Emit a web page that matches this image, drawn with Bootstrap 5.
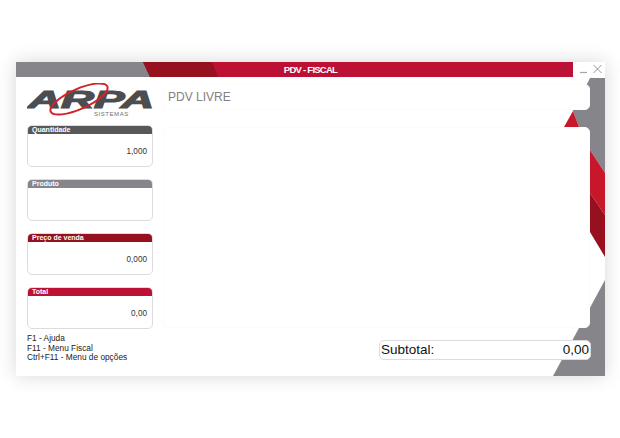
<!DOCTYPE html>
<html lang="pt-BR">
<head>
  <meta charset="UTF-8">
  <title>PDV - Fiscal</title>
  <link href="https://cdn.jsdelivr.net/npm/bootstrap@5.3.3/dist/css/bootstrap.min.css" rel="stylesheet">
  <style>
    body {
      background: #fff;
      font-family: "Liberation Sans", Arial, sans-serif;
      padding: 62px 15px 62px 16px;
    }
    .pdv-window {
      width: 589px;
      height: 314px;
      background: #fff;
      box-shadow: 0 0 18px rgba(0, 0, 0, .16);
    }
    .pdv-art {
      position: absolute;
      inset: 0;
      width: 100%;
      height: 100%;
    }
    .pdv-titlebar {
      height: 16px;
      display: grid;
      grid-template-columns: 1fr auto 1fr;
      align-items: center;
    }
    .pdv-title {
      color: #fff;
      font-size: 9.5px;
      font-weight: 700;
      letter-spacing: -.75px;
    }
    .pdv-winbtns {
      justify-self: end;
      width: 31px;
      height: 16px;
    }
    .pdv-side {
      width: 126px;
      margin-left: 11px;
    }
    .pdv-logo {
      display: block;
      width: 128px;
      height: 43px;
      margin-top: 5px;
      margin-bottom: -1px;
    }
    .pdv-logo-word {
      font: italic 700 24px "Liberation Sans", sans-serif;
      fill: #4d4d4f;
      stroke: #4d4d4f;
      stroke-width: 1.2px;
    }
    .pdv-logo-sub {
      font: 400 6px "Liberation Sans", sans-serif;
      fill: #6d6e71;
      letter-spacing: .55px;
    }
    .pdv-fields {
      gap: 12px;
    }
    .pdv-field {
      height: 42px;
      border: 1px solid #dcdcde;
      border-radius: 5px;
      overflow: hidden;
      background: #fff;
    }
    .pdv-field .card-header {
      height: 9px;
      padding: 0 0 0 5px;
      margin: -1px -1px 0;
      border: 0;
      border-radius: 0;
      color: #fff;
      font-size: 7px;
      font-weight: 700;
      line-height: 9px;
    }
    .pdv-field .card-body {
      padding: 5px 5px 0 0;
      color: #333;
      font-size: 8.2px;
    }
    .head-dark { background: #58585a; }
    .head-gray { background: #85858b; }
    .head-wine { background: #96101f; }
    .head-red { background: #bd1035; }
    .pdv-help {
      margin-top: 5px;
      color: #222;
      font-size: 8.3px;
      line-height: 9.6px;
    }
    .pdv-main {
      width: 427px;
      margin-left: 10px;
      margin-top: 6px;
    }
    .pdv-panel {
      background: #fff;
      border: 1px solid #fbfbfb;
      border-radius: 5px;
    }
    .pdv-heading {
      height: 26px;
      padding-left: 4px;
      color: #808184;
      font-size: 12px;
    }
    .pdv-grid {
      height: 201px;
      margin-top: 17px;
    }
    .pdv-subtotal {
      width: 212px;
      height: 20px;
      margin: 12px -1px 0 auto;
      padding: 0 1px;
      background: #fff;
      border: 1px solid #dcdcde;
      border-radius: 5px;
      color: #111;
      font-size: 13.5px;
    }
  </style>
</head>
<body>

<div class="pdv-window position-relative">
  <svg class="pdv-art" viewBox="16 62 589 314" aria-hidden="true">
    <polygon points="16,62 146,62 152,77 16,77" fill="#85858b"/>
    <polygon points="143,62 573,62 573,77 150,77" fill="#bd1035"/>
    <polygon points="143,62 212,62 218,77 150,77" fill="#96101f"/>
    <polygon points="590,78 605,78 605,173 590,150 579,127 573,111 573,100 587,84" fill="#85858b"/>
    <polygon points="573,111 564,127 590,160 590,193 605,215 605,173 590,150 579,127" fill="#c8172b"/>
    <polygon points="590,193 605,215 605,257 590,232" fill="#96101f"/>
    <polygon points="605,280 553,376 605,376" fill="#85858b"/>
  </svg>

  <div class="position-relative">
    <div class="pdv-titlebar">
      <span></span>
      <span class="pdv-title">PDV - FISCAL</span>
      <svg class="pdv-winbtns" viewBox="0 0 31 16" aria-hidden="true">
        <path d="M6 10.5h7" stroke="#a4a4a8" stroke-width="1.2"/>
        <path d="M19.5 3l8 8M27.5 3l-8 8" stroke="#8a8a8e" stroke-width=".9" fill="none"/>
      </svg>
    </div>

    <div class="d-flex">
      <div class="pdv-side">
        <svg class="pdv-logo" viewBox="0 0 128 43" aria-hidden="true">
          <text class="pdv-logo-word" x="1" y="25" textLength="126" lengthAdjust="spacingAndGlyphs">ARPA</text>
          <text class="pdv-logo-sub" x="67" y="33">SISTEMAS</text>
          <ellipse cx="52" cy="16" rx="31" ry="10" transform="rotate(-24 52 16)" fill="none" stroke="#d2232a" stroke-width="2"/>
        </svg>

        <div class="d-flex flex-column pdv-fields">
          <div class="card pdv-field">
            <div class="card-header head-dark">Quantidade</div>
            <div class="card-body d-flex align-items-center justify-content-end">1,000</div>
          </div>
          <div class="card pdv-field">
            <div class="card-header head-gray">Produto</div>
            <div class="card-body"></div>
          </div>
          <div class="card pdv-field">
            <div class="card-header head-wine">Preço de venda</div>
            <div class="card-body d-flex align-items-center justify-content-end">0,000</div>
          </div>
          <div class="card pdv-field">
            <div class="card-header head-red">Total</div>
            <div class="card-body d-flex align-items-center justify-content-end">0,00</div>
          </div>
        </div>

        <div class="pdv-help">
          <div>F1 - Ajuda</div>
          <div>F11 - Menu Fiscal</div>
          <div>Ctrl+F11 - Menu de opções</div>
        </div>
      </div>

      <div class="pdv-main">
        <div class="pdv-panel pdv-heading d-flex align-items-center">PDV LIVRE</div>
        <div class="pdv-panel pdv-grid"></div>
        <div class="pdv-subtotal d-flex align-items-center justify-content-between">
          <span>Subtotal:</span>
          <span>0,00</span>
        </div>
      </div>
    </div>
  </div>
</div>

<script src="https://cdn.jsdelivr.net/npm/bootstrap@5.3.3/dist/js/bootstrap.bundle.min.js"></script>
</body>
</html>
